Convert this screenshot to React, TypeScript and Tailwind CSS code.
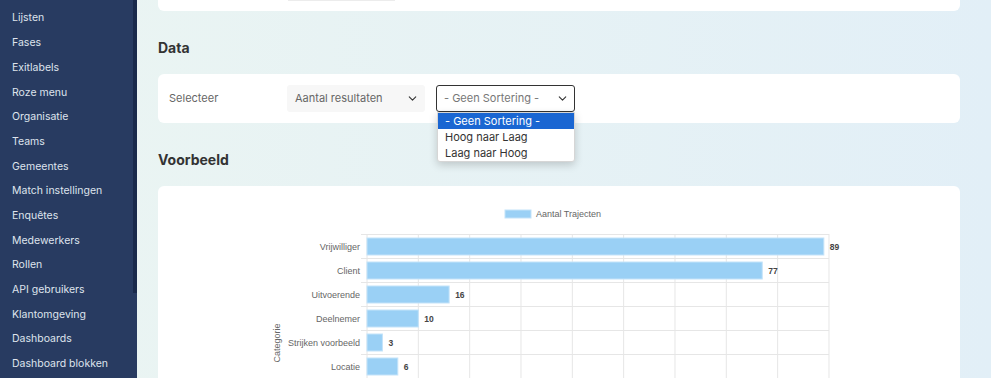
import { ChevronDown } from "lucide-react";

const menu = [
  "Lijsten",
  "Fases",
  "Exitlabels",
  "Roze menu",
  "Organisatie",
  "Teams",
  "Gemeentes",
  "Match instellingen",
  "Enquêtes",
  "Medewerkers",
  "Rollen",
  "API gebruikers",
  "Klantomgeving",
  "Dashboards",
  "Dashboard blokken",
];

const rows = [
  { label: "Vrijwilliger", value: 89 },
  { label: "Client", value: 77 },
  { label: "Uitvoerende", value: 16 },
  { label: "Deelnemer", value: 10 },
  { label: "Strijken voorbeeld", value: 3 },
  { label: "Locatie", value: 6 },
];

function Chart() {
  const x0 = 367;
  const step = 51.33;
  const unit = step / 10;
  return (
    <svg
      width="802"
      height="192"
      viewBox="158 186 802 192"
      className="block"
      style={{ fontFamily: '"Liberation Sans", Arial, sans-serif' }}
    >
      {/* legend */}
      <rect x="505" y="210" width="26" height="8" fill="#9ad0f5" stroke="#c4e3f9" strokeWidth="1" />
      <text x="536" y="217" fontSize="9" fill="#666">
        Aantal Trajecten
      </text>

      {/* grid */}
      {Array.from({ length: 10 }).map((_, i) => (
        <line key={i} x1={x0 + i * step} y1="234" x2={x0 + i * step} y2="380" stroke="#e6e6e6" strokeWidth="1" />
      ))}
      {Array.from({ length: 7 }).map((_, i) => (
        <line key={i} x1={x0 - 6} y1={234.5 + i * 24} x2={x0 + 9 * step} y2={234.5 + i * 24} stroke="#e6e6e6" strokeWidth="1" />
      ))}

      {rows.map((r, i) => {
        const cy = 246.5 + i * 24;
        const w = r.value * unit;
        return (
          <g key={r.label}>
            <text x="360" y={cy + 3} fontSize="9" fill="#666" textAnchor="end">
              {r.label}
            </text>
            <rect x={x0} y={cy - 8.5} width={w} height="17" fill="#9ad0f5" stroke="#c4e3f9" strokeWidth="1" />
            <text x={x0 + w + 6} y={cy + 3} fontSize="8.5" fill="#444" fontWeight="600">
              {r.value}
            </text>
          </g>
        );
      })}

      <text x="280" y="343" fontSize="9" fill="#666" textAnchor="middle" transform="rotate(-90 280 343)">
        Categorie
      </text>
    </svg>
  );
}

export default function App() {
  return (
    <div
      className="flex h-[378px] w-[991px] overflow-hidden bg-gradient-to-r from-[#ebf5f2] to-[#e2eff7] text-[#333]"
      style={{ fontFamily: 'Inter, "Noto Sans", sans-serif' }}
    >
      {/* Sidebar */}
      <div className="flex w-[137px] shrink-0 bg-[#283b61]">
        <div className="flex-1 pt-[6px]">
          {menu.map((m) => (
            <div key={m} className="flex h-[24.7px] items-center pl-3 text-[10.5px] text-[#dfe4ed]">
              {m}
            </div>
          ))}
        </div>
        <div className="flex w-[4px] flex-col">
          <div className="h-[293px] bg-[#1a2a4b]" />
        </div>
      </div>

      {/* Main */}
      <div className="flex w-[802px] flex-col pl-[21px] box-content">
        <div className="-mt-[30px] h-[41px] shrink-0 rounded-md bg-white">
          <div className="ml-[130px] mt-[20px] h-[11px] w-[107px] border-b border-[#ececec]" />
        </div>

        <div className="flex h-[63px] shrink-0 items-center pt-[9px] text-[14px] font-bold text-[#333]">Data</div>

        <div className="relative flex h-[49px] shrink-0 items-center rounded-md bg-white px-[11px]">
          <div className="w-[118px] text-[11px] text-[#666]">Selecteer</div>
          <div className="flex h-[27px] w-[138px] items-center justify-between rounded-[3px] bg-[#f7f7f7] pl-[8px] pr-[6px] text-[11px] text-[#666]">
            <span>Aantal resultaten</span>
            <ChevronDown size={13} strokeWidth={2} className="text-[#333]" />
          </div>
          <div className="relative ml-[11px]">
            <div className="flex h-[27px] w-[139px] items-center justify-between rounded-[3px] border border-[#333] bg-white pl-[7px] pr-[5px] text-[11px] text-[#777]">
              <span>- Geen Sortering -</span>
              <ChevronDown size={13} strokeWidth={2} className="text-[#333]" />
            </div>
            <div className="absolute left-[1px] top-[27px] z-10 w-[138px] rounded-b-[3px] border border-[#d6d6d6] bg-white text-[11px] text-[#333] shadow-[0_3px_8px_rgba(0,0,0,0.18)]">
              <div className="flex h-[16px] items-center bg-[#1a66d2] pl-[7px] text-white">- Geen Sortering -</div>
              <div className="flex h-[16px] items-center pl-[7px]">Hoog naar Laag</div>
              <div className="flex h-[16px] items-center pl-[7px]">Laag naar Hoog</div>
            </div>
          </div>
        </div>

        <div className="flex h-[63px] shrink-0 items-center pt-[9px] text-[14px] font-bold text-[#333]">Voorbeeld</div>

        <div className="h-[200px] shrink-0 overflow-hidden rounded-t-md bg-white">
          <Chart />
        </div>
      </div>
    </div>
  );
}
